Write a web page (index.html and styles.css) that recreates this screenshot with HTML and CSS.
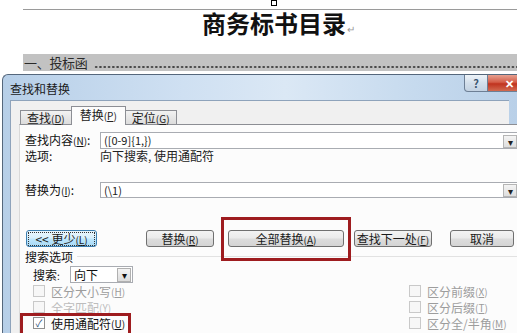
FILE: index.html
```html
<!DOCTYPE html>
<html lang="zh">
<head>
<meta charset="utf-8">
<link rel="stylesheet" href="styles.css">
</head>
<body>
<div class="doc">
  <div class="anchor"><div class="sq"></div></div>
  <div class="rule"></div>
  <div class="doc-title">商务标书目录<span class="ret">↵</span></div>
  <div class="band"><span class="toc-text">一、投标函</span><span class="leader"></span></div>
</div>

<div class="dialog">
  <div class="titlebar">
    <span class="caption">查找和替换</span>
    <div class="caps">
      <div class="cap help">?</div>
      <div class="cap close">✕</div>
    </div>
  </div>
  <div class="client">
    <div class="tabs">
      <div class="tab">查找<span class="acc">(<u>D</u>)</span></div>
      <div class="tab active">替换<span class="acc">(<u>P</u>)</span></div>
      <div class="tab">定位<span class="acc">(<u>G</u>)</span></div>
    </div>
    <div class="panel">
      <div class="row r-find">
        <span class="lbl">查找内容<span class="acc">(<u>N</u>)</span>:</span>
        <div class="combo"><span class="val">([0-9]{1,})</span><span class="drop">▾</span></div>
      </div>
      <div class="row r-opt">
        <span class="lbl">选项:</span>
        <span class="optval">向下搜索, 使用通配符</span>
      </div>
      <div class="row r-repl">
        <span class="lbl">替换为<span class="acc">(<u>I</u>)</span>:</span>
        <div class="combo"><span class="val">(\1)</span><span class="drop">▾</span></div>
      </div>
      <div class="btnrow">
        <div class="btn b-less focus"><span class="in">&lt;&lt; 更少<span class="acc">(<u>L</u>)</span></span></div>
        <div class="btn b-repl">替换<span class="acc">(<u>R</u>)</span></div>
        <div class="btn b-all">全部替换<span class="acc">(<u>A</u>)</span></div>
        <div class="btn b-next">查找下一处<span class="acc">(<u>F</u>)</span></div>
        <div class="btn b-cancel">取消</div>
      </div>
      <div class="sect"><span>搜索选项</span><span class="sect-line"></span></div>
      <div class="opts">
        <div class="col-left">
          <div class="search-row">
            <span class="slbl">搜索<span class="acc">:</span></span>
            <div class="select"><span>向下</span><span class="sdrop">▾</span></div>
          </div>
          <div class="cb dis"><span class="box"></span>区分大小写<span class="acc">(<u>H</u>)</span></div>
          <div class="cb dis faint"><span class="box"></span>全字匹配<span class="acc">(<u>Y</u>)</span></div>
          <div class="cb"><span class="box checked">✓</span>使用通配符<span class="acc">(<u>U</u>)</span></div>
        </div>
        <div class="col-right">
          <div class="cb dis"><span class="box"></span>区分前缀<span class="acc">(<u>X</u>)</span></div>
          <div class="cb dis"><span class="box"></span>区分后缀<span class="acc">(<u>T</u>)</span></div>
          <div class="cb dis"><span class="box"></span>区分全/半角<span class="acc">(<u>M</u>)</span></div>
        </div>
      </div>
    </div>
  </div>
</div>

<div class="hl hl-all"></div>
<div class="hl hl-wild"></div>
</body>
</html>
```

FILE: styles.css
```css
html, body { margin: 0; padding: 0; }
body {
  width: 517px; height: 333px; overflow: hidden; position: relative;
  background: #fff;
  font-family: "Noto Sans CJK SC", "Noto Sans", sans-serif;
  font-size: 12px; color: #111;
}
.acc { font-size: 10px; }
.acc u { text-decoration: underline; }

/* document */
.doc { padding-left: 23px; }
.anchor { height: 9px; }
.sq { width: 4px; height: 4px; border: 1px solid #000; margin-left: 248px; }
.rule { height: 1px; background: #9a9a9a; }
.doc-title {
  padding-left: 179px;
  font-size: 24px; line-height: 26px; font-weight: 700; color: #111;
  height: 26px;
}
.ret { font-size: 10px; font-weight: 400; color: #999; margin-left: 1px; }
.band {
  margin-top: 18px; height: 17px; background: #c2c2c2;
  display: flex; align-items: center;
}
.toc-text { font-size: 13px; color: #2a2a2a; line-height: 17px; padding-left: 1px; letter-spacing: -0.3px; }
.leader {
  flex: 1; height: 2px; margin-left: 6px; margin-top: 8px;
  background-image: radial-gradient(circle, #444 0.9px, transparent 1.3px);
  background-size: 4.3px 2px; background-repeat: repeat-x;
}

/* dialog */
.dialog {
  margin-top: 3px; margin-left: 2px; width: 499px;
  border: 1px solid #55677c; border-bottom: none; border-right: none;
  border-radius: 6px 0 0 0;
  background: linear-gradient(to right, #b7cfe8 0%, #cfe0f2 35%, #dbe8f5 55%, #c6daee 80%, #b9d0e8 100%);
  padding: 0 8px 0 7px;
  height: 260px;
}
.titlebar { height: 25px; display: flex; align-items: flex-start; }
.caption { font-size: 12px; line-height: 12px; margin-top: 8px; color: #1a1a1a; flex: 1; }
.caps { display: flex; margin-right: -8px; flex: none; width: 53px; }
.cap {
  height: 17px; border: 1px solid #6d7f95; border-top: none; flex: none; box-sizing: border-box;
  display: flex; align-items: center; justify-content: center;
}
.help {
  width: 24px; border-radius: 0 0 0 4px;
  background: linear-gradient(#eef3f8, #d3dfeb 50%, #c3d2e2);
  color: #3b5670; font-size: 11px; font-weight: 700;
}
.close {
  width: 29px; padding-left: 13px; border-left: none; border-right: none;
  background: linear-gradient(#e6a090, #d45d48 45%, #c0331f 55%, #d26a50);
  color: #fff; font-size: 11px; font-weight: 700;
}

.client {
  background: #f0f0f0; border: 1px solid #8ea3bb; border-bottom: none; border-right: none;
  height: 240px;
}
.tabs { height: 23px; display: flex; align-items: flex-end; padding-left: 9px; }
.tab {
  height: 13px; line-height: 13px; padding: 0 6px;
  border: 1px solid #8c8e94; border-bottom: none; margin-right: -1px;
  background: linear-gradient(#f2f2f2, #dcdcdc);
  color: #222; white-space: nowrap;
}
.tab.active {
  height: 18px; line-height: 15px; background: #fcfcfc; position: relative; z-index: 1;
  margin-bottom: -1px; padding: 0 8px;
}
.panel {
  margin-left: 8px; margin-right: -8px; border-top: 1px solid #8c8e94; border-left: 1px solid #d9d9d9;
  background: #fcfcfc; height: 220px; padding-left: 5px;
}
.row { display: flex; align-items: center; }
.lbl { width: 75px; flex: none; white-space: nowrap; line-height: 14px; }
.r-find { margin-top: 7px; height: 17px; }
.r-opt { height: 14px; line-height: 14px; }
.r-repl { margin-top: 19px; height: 16px; }
.combo {
  width: 417px; flex: none; height: 15px; border: 1px solid #a9acb2;
  background: #fff; display: flex; align-items: center; position: relative;
}
.r-repl .combo { height: 14px; }
.val { padding-left: 3px; font-size: 11px; line-height: 13px; color: #222; }
.drop {
  position: absolute; right: 1px; top: 2px; width: 12px; height: 11px;
  border: 1px solid #b5b5b5; background: linear-gradient(#f4f4f4, #dedede);
  font-size: 10px; line-height: 11px; text-align: center; color: #222;
}
.r-repl .drop { top: 1px; }
.optval { color: #222; line-height: 14px; }

.btnrow { display: flex; margin-top: 32px; height: 17px; }
.btn {
  flex: none; height: 15px; line-height: 15px; border: 1px solid #707070; border-radius: 3px;
  background: linear-gradient(#f3f3f3, #ebebeb 45%, #dcdcdc 55%, #d4d4d4);
  text-align: center; white-space: nowrap; color: #1a1a1a;
}
.b-less { margin-left: 1px; width: 69px; }
.b-less.focus { border-color: #3c7fb1; background: linear-gradient(#eaf6fd, #d9f0fc 45%, #bee6fd 55%, #a7d9f5); }
.b-less .in { display: block; margin: 1px; line-height: 13px; outline: 1px dotted #333; outline-offset: -1px; }
.b-repl { margin-left: 49px; width: 66px; }
.b-all { margin-left: 14px; width: 114px; }
.b-next { margin-left: 10px; width: 76px; }
.b-cancel { margin-left: 18px; width: 62px; }

.sect { display: flex; align-items: center; margin-top: 2px; height: 15px; line-height: 15px; }
.sect-line { flex: 1; height: 1px; background: #e2e2e2; margin-left: 4px; }

.opts { display: flex; }
.col-left { width: 376px; flex: none; padding-left: 8px; }
.search-row { display: flex; align-items: center; height: 17px; margin-top: 2px; }
.slbl { width: 37px; }
.select {
  height: 17px; border: 1px solid #a9acb2; background: #fff;
  display: flex; align-items: center; padding-left: 3px; position: relative; box-sizing: border-box;
  width: 63px;
}
.sdrop {
  position: absolute; right: 1px; top: 1px; width: 12px; height: 12px;
  border: 1px solid #b0b0b0; background: linear-gradient(#f4f4f4, #dcdcdc);
  font-size: 10px; line-height: 12px; text-align: center;
}
.col-right { padding-top: 19px; }
.cb { display: flex; align-items: center; height: 16px; white-space: nowrap; }
.cb .box {
  width: 10px; height: 10px; border: 1px solid #8f8f8f; background: #fff;
  margin-right: 6px; font-size: 10px; line-height: 10px; text-align: center; color: #2c4d78;
}
.cb.dis { color: #9d9d9d; }
.cb.dis .box { border-color: #c9c9c9; background: #f7f7f7; }
.cb.faint { color: #bdbdbd; }

/* red highlight boxes drawn over the dialog */
.hl { position: absolute; border: 3px solid #9e1c1f; box-sizing: border-box; }
.hl-all { left: 221px; top: 217px; width: 130px; height: 44px; }
.hl-wild { left: 20px; top: 313px; width: 111px; height: 30px; }
```
